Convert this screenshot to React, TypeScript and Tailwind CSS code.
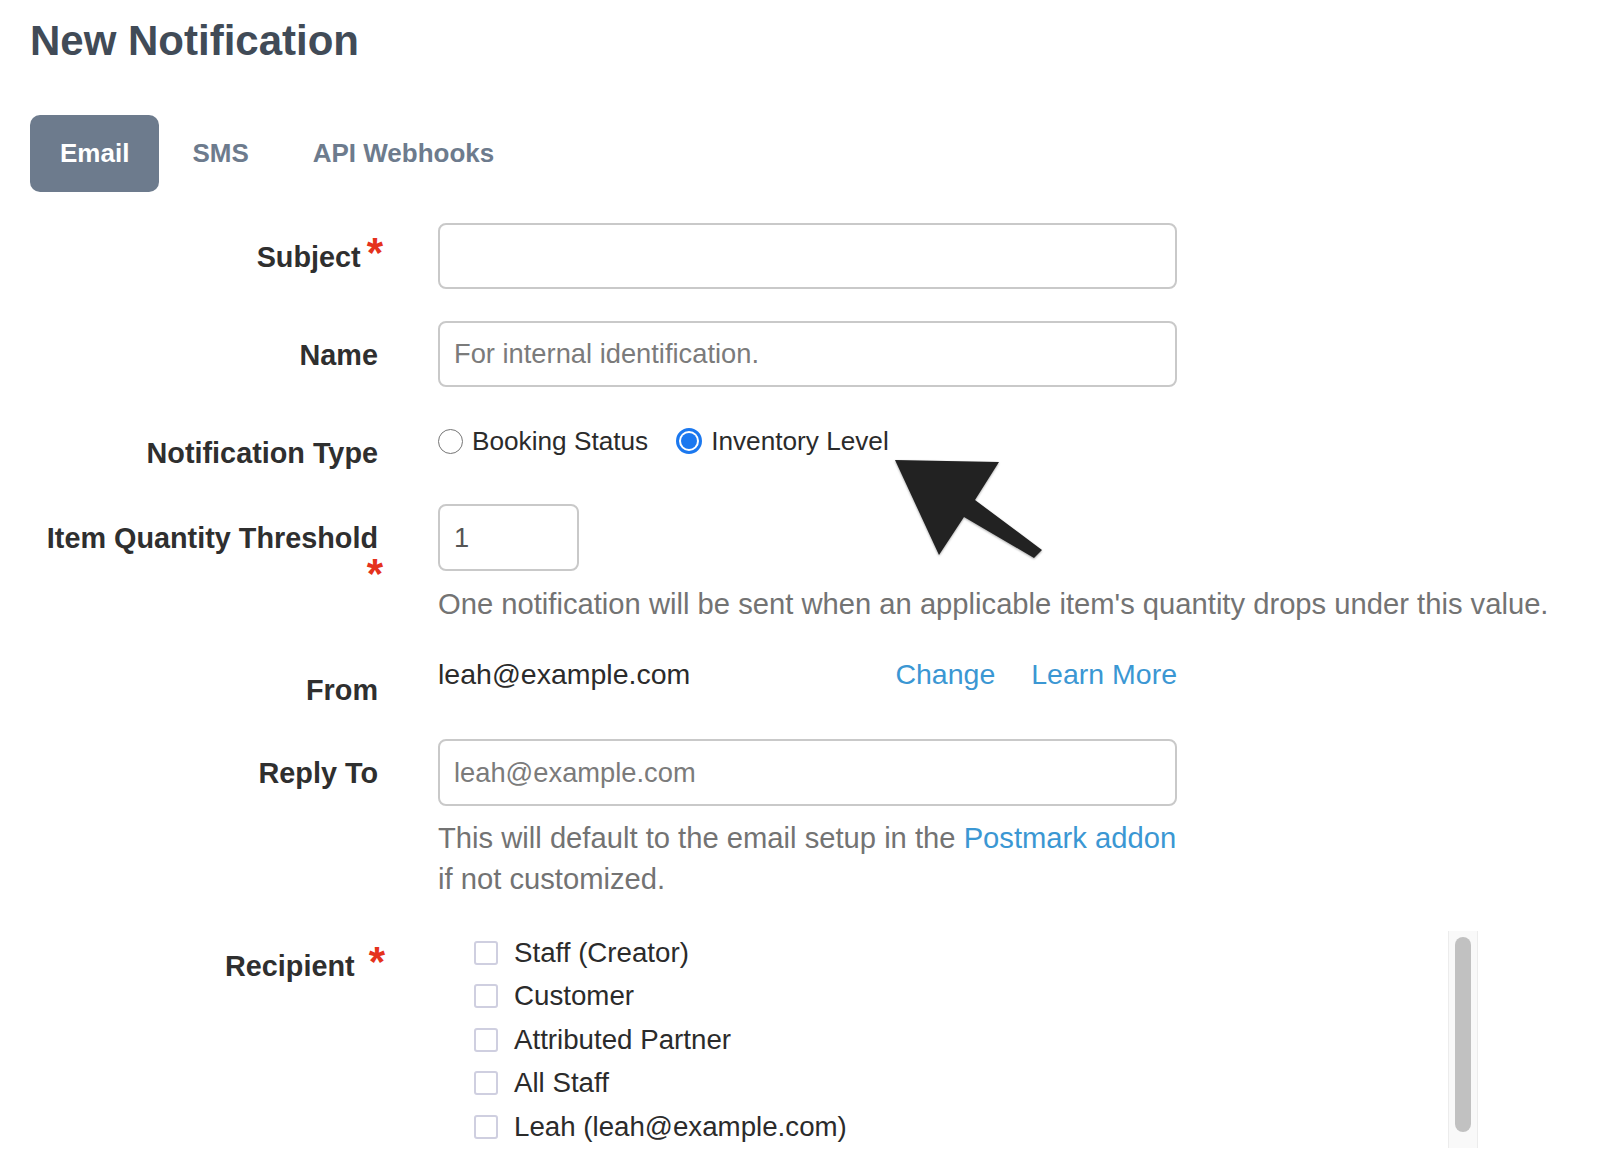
import type { ReactNode } from 'react';

const Asterisk = ({ className = '' }: { className?: string }) => (
  <span className={`relative top-0 text-[42px] leading-[0] font-bold text-[#e5321c] ${className}`}>*</span>
);

const Label = ({ children, className = 'pt-[14px]' }: { children: ReactNode; className?: string }) => (
  <div
    className={`w-[348px] shrink-0 text-right text-[28.8px] leading-[40px] font-bold text-[#2f2f2f] ${className}`}
  >
    {children}
  </div>
);

const TextInput = ({ placeholder, className = '' }: { placeholder?: string; className?: string }) => (
  <input
    type="text"
    placeholder={placeholder}
    className={`h-[66px] w-[739px] rounded-[8px] border-2 border-[#c9c9c9] bg-white px-[14px] text-[27.3px] text-[#555] outline-none placeholder:text-[#7b7b7b] ${className}`}
  />
);

const Radio = ({ checked, label }: { checked?: boolean; label: string }) => (
  <label className="flex items-center gap-[9px]">
    {checked ? (
      <span className="flex h-[26px] w-[26px] items-center justify-center rounded-full border-[3px] border-[#1b78ef] bg-white p-[2px]">
        <span className="h-full w-full rounded-full bg-[#1b78ef]" />
      </span>
    ) : (
      <span className="h-[25px] w-[25px] rounded-full border-[1.5px] border-[#767676] bg-white" />
    )}
    <span className="text-[26.2px] leading-[40px] text-[#2b2b2b]">{label}</span>
  </label>
);

const recipients = ['Staff (Creator)', 'Customer', 'Attributed Partner', 'All Staff', 'Leah (leah@example.com)'];

export default function App() {
  return (
    <div className="relative min-h-[1164px] w-[1624px] bg-white pl-[30px] font-['Liberation_Sans',Arial,sans-serif]">
      <h1 className="pt-[18px] text-[42px] leading-[46px] font-bold text-[#414b57]">New Notification</h1>

      {/* Tabs */}
      <div className="mt-[51px] flex gap-[2px]">
        <div className="flex h-[77px] items-center rounded-[10px] bg-[#6d7b8d] px-[30px] text-[26px] font-bold text-white">
          Email
        </div>
        <div className="flex h-[77px] items-center px-[31px] text-[26px] font-bold text-[#6d7b8d]">SMS</div>
        <div className="flex h-[77px] items-center px-[31px] text-[26px] font-bold text-[#6d7b8d]">API Webhooks</div>
      </div>

      <div className="mt-[31px]">
        {/* Subject */}
        <div className="mb-[32px] flex gap-[60px]">
          <Label>
            Subject
            <Asterisk className="ml-[6px] -mr-[5px]" />
          </Label>
          <TextInput />
        </div>

        {/* Name */}
        <div className="mb-[32px] flex gap-[60px]">
          <Label>Name</Label>
          <TextInput placeholder="For internal identification." />
        </div>

        {/* Notification type */}
        <div className="mb-[31px] flex gap-[60px]">
          <Label>Notification Type</Label>
          <div className="-mt-[10px] flex gap-[28px]">
            <Radio label="Booking Status" />
            <Radio checked label="Inventory Level" />
          </div>
        </div>

        {/* Threshold */}
        <div className="mb-[32px] flex gap-[60px]">
          <Label>
            Item Quantity Threshold
            <br />
            <Asterisk className="-mr-[5px]" />
          </Label>
          <div>
            <input
              type="text"
              defaultValue="1"
              className="h-[67px] w-[141px] rounded-[8px] border-2 border-[#c9c9c9] bg-white px-[14px] text-[27.3px] text-[#555] outline-none"
            />
            <p className="mt-[13px] whitespace-nowrap text-[29.2px] leading-[40px] text-[#737373]">
              One notification will be sent when an applicable item's quantity drops under this value.
            </p>
          </div>
        </div>

        {/* From */}
        <div className="mb-[29px] flex gap-[60px]">
          <Label>From</Label>
          <div className="-mt-[2px] flex w-[739px] text-[28.5px] leading-[40px]">
            <span className="flex-1 text-[#2b2b2b]">leah@example.com</span>
            <a className="text-[#3b97d3]">Change</a>
            <a className="ml-[36px] text-[#3b97d3]">Learn More</a>
          </div>
        </div>

        {/* Reply to */}
        <div className="mb-[26px] flex gap-[60px]">
          <Label>Reply To</Label>
          <div className="w-[739px]">
            <TextInput placeholder="leah@example.com" className="h-[67px]" />
            <p className="mt-[12px] text-[29.2px] leading-[41px] text-[#737373]">
              This will default to the email setup in the <a className="text-[#3b97d3]">Postmark addon</a> if not
              customized.
            </p>
          </div>
        </div>

        {/* Recipient */}
        <div className="flex gap-[60px]">
          <Label className="pt-[20px]">
            Recipient
            <Asterisk className="ml-[14px] -mr-[7px]" />
          </Label>
          <div className="mt-[5px] flex h-[217px] w-[1040px] overflow-hidden">
            <div className="flex-1 pl-[36px]">
              {recipients.map((r) => (
                <div key={r} className="flex h-[43.5px] items-center gap-[16px]">
                  <span className="h-[24px] w-[24px] rounded-[3px] border-2 border-[#cfcfe0] bg-white" />
                  <span className="text-[27.7px] text-[#2b2b2b]">{r}</span>
                </div>
              ))}
            </div>
            <div className="h-full w-[30px] border-x border-[#ececec] bg-[#f9f9f9] pt-[6px]">
              <div className="mx-auto h-[195px] w-[16px] rounded-full bg-[#c1c1c1]" />
            </div>
          </div>
        </div>
      </div>

      {/* Annotation arrow */}
      <svg
        className="pointer-events-none absolute left-[885px] top-[452px] h-[115px] w-[170px] drop-shadow-[0_1px_1px_rgba(0,0,0,0.35)]"
        viewBox="0 0 170 115"
      >
        <polygon points="10,8 114,10 90,48 157,98 149,106 79,65 54,103" fill="#222" />
      </svg>
    </div>
  );
}
